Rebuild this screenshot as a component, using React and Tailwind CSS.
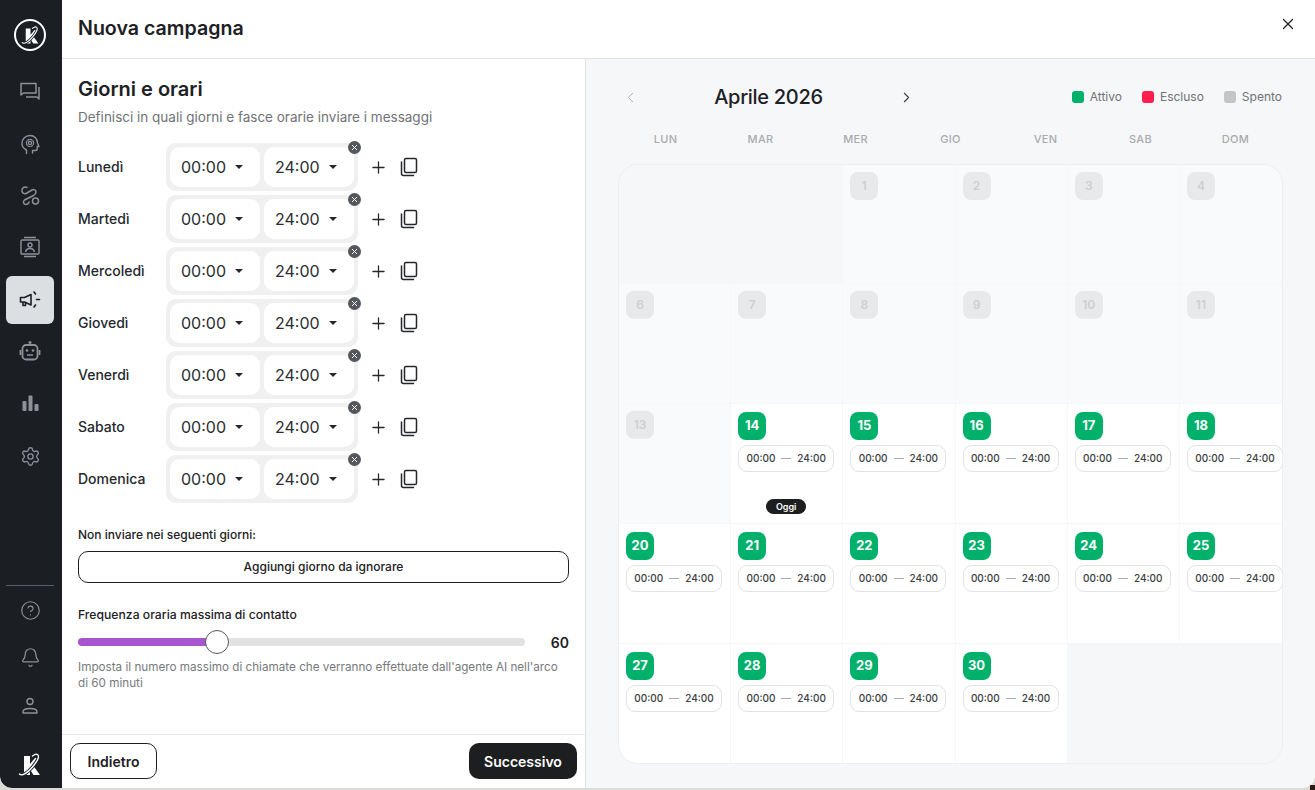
import React from 'react'
import { X, Plus, ChevronLeft, ChevronRight, Settings, CircleHelp, Bell } from 'lucide-react'

const days = ['Lunedì', 'Martedì', 'Mercoledì', 'Giovedì', 'Venerdì', 'Sabato', 'Domenica']
const weekdays = ['LUN', 'MAR', 'MER', 'GIO', 'VEN', 'SAB', 'DOM']

// 6 columns, the calendar in the picture really has them
const cells = [
    { t: 'blank' }, { t: 'blank' }, { n: 1, t: 'off' }, { n: 2, t: 'off' }, { n: 3, t: 'off' }, { n: 4, t: 'off' },
    { n: 6, t: 'off' }, { n: 7, t: 'off' }, { n: 8, t: 'off' }, { n: 9, t: 'off' }, { n: 10, t: 'off' }, { n: 11, t: 'off' },
    { n: 13, t: 'off' }, { n: 14, t: 'on', today: true }, { n: 15, t: 'on' }, { n: 16, t: 'on' }, { n: 17, t: 'on' }, { n: 18, t: 'on' },
    { n: 20, t: 'on' }, { n: 21, t: 'on' }, { n: 22, t: 'on' }, { n: 23, t: 'on' }, { n: 24, t: 'on' }, { n: 25, t: 'on' },
    { n: 27, t: 'on' }, { n: 28, t: 'on' }, { n: 29, t: 'on' }, { n: 30, t: 'on' }, { t: 'blank' }, { t: 'blank' },
]

function LogoK({ size = 24 }) {
    return (
        <svg width={size} height={size} viewBox="0 0 24 24" fill="none">
            <path d="M6 3h6v8l5-6h5l-6.500 8L22 22h-6.500L12 16.500V22H6z" fill="#fff" />
            <path d="M1.500 21c2.500 2.500 8-1 13-7S22 3.500 19.500 1.500c-1-.8-3 0-5 1.500" stroke="#1b1f24" strokeWidth="3.500" />
            <path d="M1.500 21c2.500 2.500 8-1 13-7S22 3.500 19.500 1.500c-1-.8-3 0-5 1.500" stroke="#fff" strokeWidth="1.400" strokeLinecap="round" />
        </svg>
    )
}

function ChatIcon() {
    return (
        <svg width="22" height="22" viewBox="0 0 22 22" fill="none" stroke="currentColor" strokeWidth="1.500" strokeLinejoin="round">
            <path d="M2 3.500h15v9.500H4.500L2 15z" />
            <path d="M20 7v12l-2-2H7" />
        </svg>
    )
}

function BrainIcon() {
    return (
        <svg width="22" height="22" viewBox="0 0 22 22" fill="none" stroke="currentColor" strokeWidth="1.400" strokeLinejoin="round" strokeLinecap="round">
            <path d="M7.500 20.500v-3.500C4.500 15.500 3 13 3 10.500 3 6 6.500 2.500 11 2.500s7.500 3.500 7.500 7.500l1.500 3.500h-1.800v2.500c0 1-.7 1.500-1.700 1.500h-3v2.500" />
            <circle cx="11" cy="10" r="1.600" />
            <circle cx="11" cy="10" r="3.600" strokeDasharray="1.500 1.330" strokeWidth="1.300" />
        </svg>
    )
}

function RouteIcon() {
    return (
        <svg width="22" height="22" viewBox="0 0 22 22" fill="none" stroke="currentColor" strokeWidth="1.500" strokeLinecap="round">
            <path d="M8 3.500c-2.800-1.500-6 1-5 4 .6 1.800 2.500 2.500 4 2l6-3.500c1.800-1 4 0 4 2 0 1.500-1 2.500-2.500 3.500L5.500 16c-2 1.500-1 4.500 1.500 4.500 1.500 0 2.500-1 3-2.500" />
            <circle cx="16.500" cy="17" r="3" />
        </svg>
    )
}

function ContactIcon() {
    return (
        <svg width="22" height="22" viewBox="0 0 22 22" fill="none" stroke="currentColor" strokeWidth="1.400">
            <path d="M5 1.500h12M5 20.500h12" />
            <rect x="2" y="4" width="18" height="14" rx="1" />
            <circle cx="11" cy="9" r="2" />
            <path d="M6.500 16c.5-2.500 2.500-3.500 4.500-3.500s4 1 4.500 3.500" />
        </svg>
    )
}

function MegaphoneIcon() {
    return (
        <svg width="22" height="22" viewBox="0 0 22 22" fill="none" stroke="#1b1f24" strokeWidth="1.600" strokeLinejoin="round">
            <path d="M1.500 8.500h4L12 5.500v10.500l-6.500-3h-4z" />
            <path d="M4 13v3.500h2.500V13.500" />
            <path d="M15 3l1.500 2M17.500 10.500h3M15 18l1.500-2" strokeLinecap="round" />
        </svg>
    )
}

function BotIcon() {
    return (
        <svg width="22" height="22" viewBox="0 0 22 22" fill="none" stroke="currentColor" strokeWidth="1.800">
            <circle cx="11" cy="2.500" r="1.500" fill="currentColor" stroke="none" />
            <rect x="3.500" y="5" width="15" height="14.500" rx="3.500" />
            <path d="M1.500 10v5M20.500 10v5" />
            <circle cx="8" cy="10.500" r="1.300" fill="currentColor" stroke="none" />
            <circle cx="14" cy="10.500" r="1.300" fill="currentColor" stroke="none" />
            <path d="M8 15h6" strokeWidth="1.500" />
        </svg>
    )
}

function ChartIcon() {
    return (
        <svg width="20" height="20" viewBox="0 0 20 20" fill="currentColor">
            <rect x="2.500" y="8" width="4" height="10" rx="1" />
            <rect x="8.500" y="2.500" width="4" height="15.500" rx="1" />
            <rect x="14.500" y="11" width="4" height="7" rx="1" />
        </svg>
    )
}

function PersonIcon() {
    return (
        <svg width="20" height="20" viewBox="0 0 20 20" fill="none" stroke="currentColor" strokeWidth="1.400">
            <circle cx="10" cy="5.500" r="3" />
            <path d="M3 16c0-2.500 2-3.500 7-3.500s7 1 7 3.500v1H3z" strokeLinejoin="round" />
        </svg>
    )
}

function CopyIcon() {
    return (
        <svg width="20" height="20" viewBox="0 0 20 20" fill="none" stroke="#24272b" strokeWidth="1.500" strokeLinejoin="round">
            <rect x="5.500" y="1.500" width="12" height="14" rx="1.500" />
            <path d="M2.500 5v11.500c0 1 .8 2 2 2h10" strokeLinecap="round" />
        </svg>
    )
}

function Sidebar() {
    return (
        <aside className="w-[62px] shrink-0 bg-[#1b1f24] rounded-bl-[12px] flex flex-col items-center pr-[2px] text-[#8e9297]">
            <div className="mt-[19px] w-8 h-8 rounded-full border-2 border-white flex items-center justify-center">
                <LogoK size={19} />
            </div>
            <div className="mt-[14px] flex flex-col items-center">
                <div className="w-12 h-[52px] flex items-center justify-center"><ChatIcon /></div>
                <div className="w-12 h-[54px] flex items-center justify-center"><BrainIcon /></div>
                <div className="w-12 h-[48px] flex items-center justify-center"><RouteIcon /></div>
                <div className="w-12 h-[56px] flex items-center justify-center"><ContactIcon /></div>
                <div className="mt-px w-12 h-12 rounded-[6px] bg-[#dcdfe2] flex items-center justify-center"><MegaphoneIcon /></div>
                <div className="w-12 h-[54px] flex items-center justify-center"><BotIcon /></div>
                <div className="w-12 h-[50px] flex items-center justify-center"><ChartIcon /></div>
                <div className="w-12 h-[56px] flex items-center justify-center"><Settings size={21} strokeWidth={1.500} /></div>
            </div>
            <div className="mt-auto w-12 border-t border-[#5c6066] flex flex-col items-center">
                <div className="h-12 flex items-center justify-center"><CircleHelp size={21} strokeWidth={1.300} /></div>
                <div className="h-[46px] flex items-center justify-center"><Bell size={21} strokeWidth={1.400} /></div>
                <div className="h-[52px] flex items-center justify-center"><PersonIcon /></div>
                <div className="h-[56px] pt-[21px] flex items-start justify-center"><LogoK size={24} /></div>
            </div>
        </aside>
    )
}

function TimeSelect({ value }) {
    return (
        <div className="w-[90px] h-10 bg-white rounded-[10px] flex items-center pl-[11px] gap-[9px] text-[16px] text-[#2a2d31]">
            <span>{value}</span>
            <span className="w-0 h-0 border-x-[4px] border-x-transparent border-t-[4px] border-t-[#24272b]" />
        </div>
    )
}

function DayRow({ name }) {
    return (
        <div className="h-[52px] flex items-center">
            <div className="w-[88px] pb-[2px] text-[14px] font-medium text-[#25282c]">{name}</div>
            <div className="relative w-[192px] h-12 bg-[#f0f0f0] rounded-[10px] flex items-center gap-1 pl-1">
                <TimeSelect value="00:00" />
                <TimeSelect value="24:00" />
                <div className="absolute -top-[2px] right-[-3px] w-[13px] h-[13px] rounded-full bg-[#54575b] flex items-center justify-center">
                    <X size={9} color="#fff" strokeWidth={2.500} />
                </div>
            </div>
            <Plus size={19} strokeWidth={1.600} className="ml-[11px] text-[#24272b]" />
            <span className="ml-[11px]"><CopyIcon /></span>
        </div>
    )
}

function LeftPane() {
    return (
        <section className="w-[524px] shrink-0 bg-white border-r border-[#e2e3e5] flex flex-col">
            <div className="flex-1 px-4 pt-4">
                <h2 className="text-[20px] leading-[28px] font-semibold text-[#1d2024]">Giorni e orari</h2>
                <p className="mt-[4px] text-[13.5px] leading-5 text-[#6f7276]">Definisci in quali giorni e fasce orarie inviare i messaggi</p>
                <div className="mt-[14px]">
                    {days.map((d) => <DayRow key={d} name={d} />)}
                </div>
                <div className="mt-[22px] text-[12px] leading-4 font-medium text-[#1d2024]">Non inviare nei seguenti giorni:</div>
                <button className="mt-[8px] w-full h-8 rounded-[10px] border border-[#1d2024] bg-white text-[12px] font-medium text-[#1d2024]">
                    Aggiungi giorno da ignorare
                </button>
                <div className="mt-[24px] text-[12.2px] leading-4 font-medium text-[#1d2024]">Frequenza oraria massima di contatto</div>
                <div className="mt-[7px] h-6 flex items-center justify-between">
                    <div className="relative w-[447px] h-2 rounded-full bg-[#e2e2e2]">
                        <div className="h-2 w-[139px] rounded-full bg-[#a855d0]" />
                        <div className="absolute top-[-8px] left-[127px] w-6 h-6 rounded-full bg-white border border-[#55585c]" />
                    </div>
                    <span className="text-[14px] font-semibold text-[#1d2024]">60</span>
                </div>
                <p className="mt-[5px] text-[11.7px] leading-4 text-[#77797d]">
                    Imposta il numero massimo di chiamate che verranno effettuate dall'agente AI nell'arco di 60 minuti
                </p>
            </div>
            <div className="h-[54px] border-t border-[#e6e7e8] flex items-start justify-between pl-2 pr-2 pt-2">
                <button className="w-[87px] h-9 rounded-[10px] border border-[#1d2024] text-[14px] font-semibold text-[#1d2024]">Indietro</button>
                <button className="w-[108px] h-9 rounded-[10px] bg-[#1d1e20] text-[14px] font-semibold text-white">Successivo</button>
            </div>
        </section>
    )
}

function TimePill() {
    return (
        <div className="mt-[5px] w-[96px] h-[27px] rounded-[9px] border border-[#e2e3e5] bg-white flex items-center justify-center gap-[6px] text-[10px] font-medium text-[#3b3e42]">
            <span>00:00</span>
            <span className="w-[10px] border-t border-[#a9abae]" />
            <span>24:00</span>
        </div>
    )
}

function Cell({ c }) {
    if (c.t === 'blank') return <div className="bg-[#f6f7f9]" />
    if (c.t === 'off') {
        return (
            <div className="bg-[#f9fafb] pl-[7px] pt-[7px]">
                <div className="w-7 h-7 rounded-[8px] bg-[#e8e9ea] flex items-center justify-center text-[12px] font-semibold text-[#cdcfd1]">{c.n}</div>
            </div>
        )
    }
    return (
        <div className="relative bg-white pl-[7px] pt-2">
            <div className="w-7 h-7 rounded-[8px] bg-[#00b06b] flex items-center justify-center text-[13px] font-bold text-white">{c.n}</div>
            <TimePill />
            {c.today && (
                <div className="absolute bottom-[9px] left-[35px] w-10 h-[15px] rounded-full bg-[#1d1e20] flex items-center justify-center text-[9px] font-semibold text-white">Oggi</div>
            )}
        </div>
    )
}

function Legend({ color, label }) {
    return (
        <div className="flex items-center gap-[6px]">
            <span className={`w-3 h-3 rounded-[3px] ${color}`} />
            <span className="text-[12px] text-[#6f7276]">{label}</span>
        </div>
    )
}

function Calendar() {
    return (
        <section className="flex-1 min-w-0 bg-[#f6f7f9] rounded-br-[12px] px-[32px] pt-[24px]">
            <div className="h-7 flex items-center">
                <ChevronLeft size={17} strokeWidth={1.300} className="ml-[4px] text-[#a6a8ab]" />
                <div className="w-[259px] text-center text-[20px] font-medium tracking-[-0.3px] text-[#1d2024]">Aprile 2026</div>
                <ChevronRight size={17} strokeWidth={1.500} className="text-[#3a3d41]" />
                <div className="ml-auto mr-px flex items-center gap-[20px]">
                    <Legend color="bg-[#00b06b]" label="Attivo" />
                    <Legend color="bg-[#ff1f4f]" label="Escluso" />
                    <Legend color="bg-[#c4c5c6]" label="Spento" />
                </div>
            </div>
            <div className="mt-[20px] grid grid-cols-7 text-center text-[11px] font-medium tracking-[0.3px] text-[#a9abae]">
                {weekdays.map((w) => <div key={w}>{w}</div>)}
            </div>
            <div className="mt-[16px] h-[600px] rounded-[20px] border border-[#eceef0] bg-[#f6f7f9] overflow-hidden grid grid-cols-[repeat(6,111.2px)] grid-rows-5 gap-px">
                {cells.map((c, i) => <Cell key={i} c={c} />)}
            </div>
        </section>
    )
}

export default function App() {
    return (
        <div className="relative w-full h-[790px] overflow-hidden bg-[#dcdcd6] font-['Inter',sans-serif]">
            <div className="absolute right-0 bottom-0 w-[5px] h-[5px] bg-[#2a1a12]" />
            <div className="relative h-[788px] flex rounded-b-[12px] overflow-hidden">
                <Sidebar />
                <main className="flex-1 flex flex-col min-w-0">
                    <header className="h-[59px] shrink-0 bg-white border-b border-[#e2e3e5] flex items-center justify-between pl-4 pr-[18px]">
                        <h1 className="text-[19.6px] font-semibold text-[#1d2024]">Nuova campagna</h1>
                        <X size={18} strokeWidth={1.700} className="mb-[10px] text-[#1d2024]" />
                    </header>
                    <div className="flex-1 flex min-h-0">
                        <LeftPane />
                        <Calendar />
                    </div>
                </main>
            </div>
        </div>
    )
}
